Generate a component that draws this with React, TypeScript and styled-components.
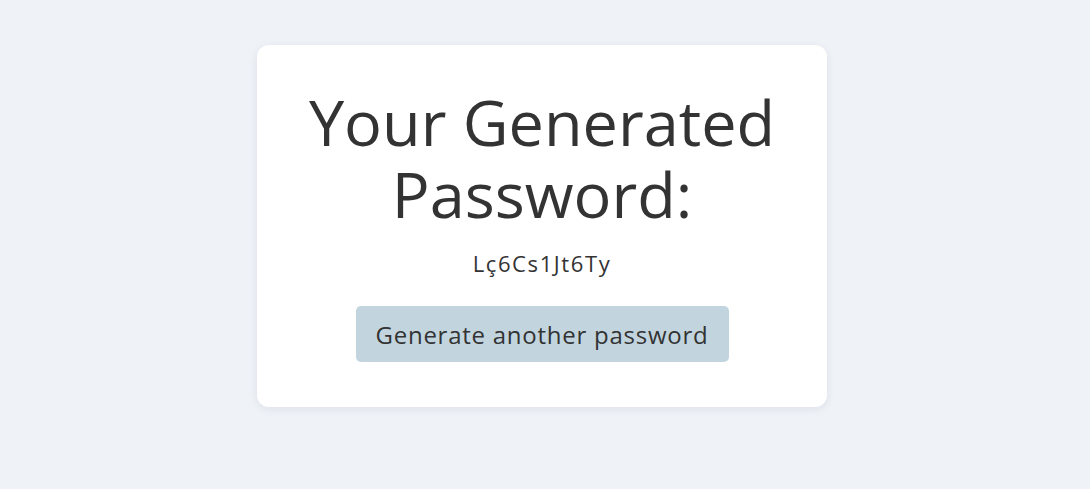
import React, { useState } from "react";
import styled, { createGlobalStyle } from "styled-components";

const GlobalStyle = createGlobalStyle`
  html, body {
    margin: 0;
    padding: 0;
    background: #eff2f7;
    font-family: "Open Sans", "Liberation Sans", sans-serif;
    color: #333333;
  }
  * { box-sizing: border-box; }
`;

const Page = styled.main`
  display: flex;
  justify-content: center;
  align-items: flex-start;
  padding: 45px 6px 0 0;
  min-height: 489px;
`;

const Card = styled.section`
  width: 570px;
  background: #ffffff;
  border-radius: 12px;
  box-shadow: 0 2px 10px rgba(30, 50, 80, 0.08);
  padding: 41px 40px 45px;
  display: flex;
  flex-direction: column;
  align-items: center;
`;

const Title = styled.h1`
  margin: 0;
  font-size: 63px;
  line-height: 72px;
  font-weight: 400;
  text-align: center;
  color: #333333;
`;

const Password = styled.p`
  margin: 20px 0 0;
  font-size: 22px;
  line-height: 26px;
  letter-spacing: 1.6px;
  color: #333333;
`;

const Button = styled.button`
  margin-top: 30px;
  height: 56px;
  padding: 0 20px;
  border: none;
  border-radius: 5px;
  background: #c2d5df;
  font-family: inherit;
  font-size: 24px;
  letter-spacing: 0.75px;
  color: #333333;
  cursor: pointer;
`;

export default function App() {
  const [pw] = useState("Lç6Cs1Jt6Ty");
  return (
    <>
      <GlobalStyle />
      <Page>
        <Card>
          <Title>
            Your Generated
            <br />
            Password:
          </Title>
          <Password>{pw}</Password>
          <Button>Generate another password</Button>
        </Card>
      </Page>
    </>
  );
}
